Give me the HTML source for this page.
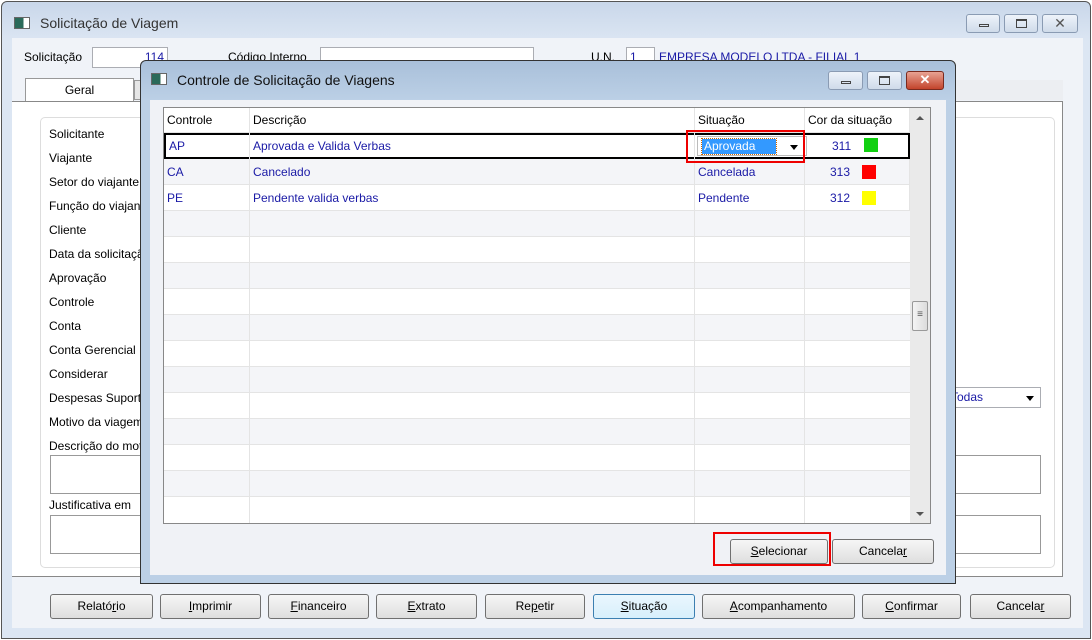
<!DOCTYPE html>
<html><head><meta charset="utf-8"><style>
*{box-sizing:border-box;margin:0;padding:0}
body{width:1092px;height:640px;overflow:hidden;background:#fff;font-family:"Liberation Sans",sans-serif;font-size:12px;color:#000;position:relative}
.a{position:absolute}
.btn{position:absolute;height:25px;border:1px solid #707070;border-radius:3px;background:linear-gradient(#f6f6f6,#dedede);text-align:center;line-height:23px;font-size:12px}
.inp{position:absolute;background:#fff;border:1px solid #abadb3}
.lbl{position:absolute;font-size:12px}
.wb{position:absolute;height:19px;border:1px solid #8a9bb3;border-radius:3px;background:linear-gradient(#eef3fa,#cfdbea)}
.row{position:absolute;left:0;width:746px;height:26px;border-bottom:1px solid #e4e4e4}
.c{position:absolute;top:0;height:26px;line-height:26px;padding-left:3px;color:#1a1aa6;border-right:1px solid #e4e4e4}
</style></head><body>
<div class="a" style="left:1px;top:1px;width:1090px;height:638px;border:1px solid #555;border-radius:6px 6px 0 0;background:linear-gradient(#c9d7ea,#dce6f3 40px,#dce6f3)"></div>
<div class="a" style="left:14px;top:17px;width:16px;height:12px;border:1px solid #666;background:linear-gradient(90deg,#2a6a5a 60%,#fff 60%)"></div>
<div class="lbl" style="left:40px;top:15px;font-size:14px;color:#333">Solicitação de Viagem</div>
<div class="wb" style="left:966px;top:14px;width:34px"><div class="a" style="left:12px;top:9px;width:10px;height:3px;border:1px solid #444"></div></div>
<div class="wb" style="left:1004px;top:14px;width:34px"><div class="a" style="left:11px;top:4px;width:11px;height:9px;border:1px solid #444;border-top-width:2px"></div></div>
<div class="wb" style="left:1042px;top:14px;width:36px;text-align:center;line-height:16px;color:#555;font-size:14px">✕</div>
<div class="a" style="left:12px;top:38px;width:1071px;height:590px;background:#f0f3f8"></div>
<div class="lbl" style="left:24px;top:50px">Solicitação</div>
<div class="inp" style="left:92px;top:47px;width:76px;height:21px;color:#1a1aa6;text-align:right;padding-right:3px;line-height:19px">114</div>
<div class="lbl" style="left:228px;top:50px">Código Interno</div>
<div class="inp" style="left:320px;top:47px;width:214px;height:21px"></div>
<div class="lbl" style="left:591px;top:50px">U.N.</div>
<div class="inp" style="left:626px;top:47px;width:29px;height:21px;padding-left:3px;line-height:19px;color:#1a1aa6">1</div>
<div class="lbl" style="left:659px;top:50px;color:#1a1aa6">EMPRESA MODELO LTDA - FILIAL 1</div>
<div class="a" style="left:37px;top:80px;width:1026px;height:20px;background:#eceef2"></div>
<div class="a" style="left:25px;top:78px;width:109px;height:24px;border:1px solid #999;border-bottom:none;background:#fff;text-align:center;line-height:22px">Geral</div>
<div class="a" style="left:134px;top:80px;width:8px;height:20px;border:1px solid #999;background:#e6e6e6"></div>
<div class="a" style="left:12px;top:101px;width:1051px;height:476px;border:1px solid #888;border-left:none;background:#fff"></div>
<div class="a" style="left:40px;top:117px;width:1015px;height:451px;border:1px solid #ddd;border-radius:5px"></div>
<div class="lbl" style="left:49px;top:122px;line-height:24px">Solicitante<br>Viajante<br>Setor do viajante<br>Função do viajante<br>Cliente<br>Data da solicitação<br>Aprovação<br>Controle<br>Conta<br>Conta Gerencial<br>Considerar<br>Despesas Suportadas<br>Motivo da viagem<br>Descrição do motivo</div>
<div class="inp" style="left:50px;top:455px;width:991px;height:39px;border-color:#999"></div>
<div class="lbl" style="left:49px;top:498px">Justificativa em</div>
<div class="inp" style="left:50px;top:515px;width:991px;height:39px;border-color:#999"></div>
<div class="inp" style="left:900px;top:387px;width:141px;height:21px;color:#1a1aa6;line-height:19px;padding-left:50px">Todas<span class="a" style="right:6px;top:8px;border:4px solid transparent;border-top:5px solid #000"></span></div>
<div class="btn" style="left:50px;top:594px;width:103px">Relató<u>r</u>io</div>
<div class="btn" style="left:160px;top:594px;width:101px"><u>I</u>mprimir</div>
<div class="btn" style="left:268px;top:594px;width:101px"><u>F</u>inanceiro</div>
<div class="btn" style="left:376px;top:594px;width:101px"><u>E</u>xtrato</div>
<div class="btn" style="left:485px;top:594px;width:100px">Re<u>p</u>etir</div>
<div class="btn" style="left:593px;top:594px;width:102px;border-color:#3c7fb1;background:linear-gradient(#eaf6fd,#d7effc)"><u>S</u>ituação</div>
<div class="btn" style="left:702px;top:594px;width:153px"><u>A</u>companhamento</div>
<div class="btn" style="left:862px;top:594px;width:99px"><u>C</u>onfirmar</div>
<div class="btn" style="left:970px;top:594px;width:101px">Cancela<u>r</u></div>
<div class="a" style="left:140px;top:60px;width:816px;height:524px;border:1px solid #333;border-radius:6px 6px 0 0;background:linear-gradient(#a9c0da,#bcd0e6 40px,#bcd0e6)"></div>
<div class="a" style="left:151px;top:73px;width:16px;height:12px;border:1px solid #666;background:linear-gradient(90deg,#2a6a5a 60%,#fff 60%)"></div>
<div class="lbl" style="left:177px;top:72px;font-size:14px;color:#111">Controle de Solicitação de Viagens</div>
<div class="wb" style="left:828px;top:71px;width:35px"><div class="a" style="left:12px;top:9px;width:10px;height:3px;border:1px solid #444"></div></div>
<div class="wb" style="left:867px;top:71px;width:35px"><div class="a" style="left:11px;top:4px;width:11px;height:9px;border:1px solid #444;border-top-width:2px"></div></div>
<div class="wb" style="left:906px;top:71px;width:38px;background:linear-gradient(#e8a393,#c3442c);border-color:#7a2a1e;color:#fff;text-align:center;line-height:16px;font-weight:bold;font-size:13px">✕</div>
<div class="a" style="left:150px;top:100px;width:796px;height:475px;background:#f0f2f6"></div>
<div class="a" style="left:163px;top:107px;width:768px;height:417px;border:1px solid #888;background:#fff;overflow:hidden">
<div class="a" style="left:0;top:0;width:746px;height:25px;background:#fff;border-bottom:1px solid #e4e4e4">
<div class="c" style="left:0;width:86px;color:#000;height:25px;line-height:25px">Controle</div>
<div class="c" style="left:86px;width:445px;color:#000;height:25px;line-height:25px">Descrição</div>
<div class="c" style="left:531px;width:110px;color:#000;height:25px;line-height:25px">Situação</div>
<div class="c" style="left:641px;width:105px;color:#000;height:25px;line-height:25px">Cor da situação</div>
</div>
<div class="row" style="top:25px;border:2px solid #000;height:26px;background:#fff">
<div class="c" style="left:0;width:84px;top:-2px">AP</div>
<div class="c" style="left:84px;width:445px;top:-2px">Aprovada e Valida Verbas</div>
<div class="a" style="left:531px;top:1px;width:110px;height:20px;border:1px solid #bbb"><span class="a" style="left:4px;top:2px;width:74px;height:15px;background:#3399ff;color:#fff;line-height:15px;padding-left:2px;outline:1px dotted #c60">Aprovada</span><span class="a" style="right:8px;top:8px;border:4px solid transparent;border-top:5px solid #000"></span></div>
<div class="c" style="left:641px;width:105px;top:-2px;border:none;padding-left:25px">311 <span class="a" style="left:57px;top:5px;width:14px;height:14px;background:#11d011"></span></div>
</div>
<div class="row" style="top:51px;background:#f4f5f8">
<div class="c" style="left:0;width:86px">CA</div><div class="c" style="left:86px;width:445px">Cancelado</div><div class="c" style="left:531px;width:110px">Cancelada</div>
<div class="c" style="left:641px;width:105px;padding-left:25px">313 <span class="a" style="left:57px;top:6px;width:14px;height:14px;background:#f00"></span></div></div>
<div class="row" style="top:77px">
<div class="c" style="left:0;width:86px">PE</div><div class="c" style="left:86px;width:445px">Pendente valida verbas</div><div class="c" style="left:531px;width:110px">Pendente</div>
<div class="c" style="left:641px;width:105px;padding-left:25px">312 <span class="a" style="left:57px;top:6px;width:14px;height:14px;background:#ff0"></span></div></div>
<div class="row" style="top:103px;background:#f4f5f8"><div class="c" style="left:0;width:86px"></div><div class="c" style="left:86px;width:445px"></div><div class="c" style="left:531px;width:110px"></div></div>
<div class="row" style="top:129px"><div class="c" style="left:0;width:86px"></div><div class="c" style="left:86px;width:445px"></div><div class="c" style="left:531px;width:110px"></div></div>
<div class="row" style="top:155px;background:#f4f5f8"><div class="c" style="left:0;width:86px"></div><div class="c" style="left:86px;width:445px"></div><div class="c" style="left:531px;width:110px"></div></div>
<div class="row" style="top:181px"><div class="c" style="left:0;width:86px"></div><div class="c" style="left:86px;width:445px"></div><div class="c" style="left:531px;width:110px"></div></div>
<div class="row" style="top:207px;background:#f4f5f8"><div class="c" style="left:0;width:86px"></div><div class="c" style="left:86px;width:445px"></div><div class="c" style="left:531px;width:110px"></div></div>
<div class="row" style="top:233px"><div class="c" style="left:0;width:86px"></div><div class="c" style="left:86px;width:445px"></div><div class="c" style="left:531px;width:110px"></div></div>
<div class="row" style="top:259px;background:#f4f5f8"><div class="c" style="left:0;width:86px"></div><div class="c" style="left:86px;width:445px"></div><div class="c" style="left:531px;width:110px"></div></div>
<div class="row" style="top:285px"><div class="c" style="left:0;width:86px"></div><div class="c" style="left:86px;width:445px"></div><div class="c" style="left:531px;width:110px"></div></div>
<div class="row" style="top:311px;background:#f4f5f8"><div class="c" style="left:0;width:86px"></div><div class="c" style="left:86px;width:445px"></div><div class="c" style="left:531px;width:110px"></div></div>
<div class="row" style="top:337px"><div class="c" style="left:0;width:86px"></div><div class="c" style="left:86px;width:445px"></div><div class="c" style="left:531px;width:110px"></div></div>
<div class="row" style="top:363px;background:#f4f5f8"><div class="c" style="left:0;width:86px"></div><div class="c" style="left:86px;width:445px"></div><div class="c" style="left:531px;width:110px"></div></div>
<div class="row" style="top:389px;border:none"><div class="c" style="left:0;width:86px"></div><div class="c" style="left:86px;width:445px"></div><div class="c" style="left:531px;width:110px"></div></div>
<div class="a" style="left:746px;top:0;width:20px;height:415px;background:#eaeaea"></div>
<div class="a" style="left:752px;top:8px;border:4px solid transparent;border-bottom:4px solid #555;border-top:none"></div>
<div class="a" style="left:752px;top:404px;border:4px solid transparent;border-top:4px solid #555;border-bottom:none"></div>
<div class="a" style="left:748px;top:193px;width:16px;height:30px;border:1px solid #999;border-radius:2px;background:linear-gradient(90deg,#f4f4f4,#dcdcdc);text-align:center;line-height:26px;font-size:10px;color:#555">≡</div>
</div>
<div class="a" style="left:686px;top:130px;width:119px;height:33px;border:2px solid #e00"></div>
<div class="btn" style="left:730px;top:539px;width:98px"><u>S</u>elecionar</div>
<div class="btn" style="left:832px;top:539px;width:102px">Cancela<u>r</u></div>
<div class="a" style="left:713px;top:532px;width:118px;height:34px;border:2px solid #e00"></div>
</body></html>
